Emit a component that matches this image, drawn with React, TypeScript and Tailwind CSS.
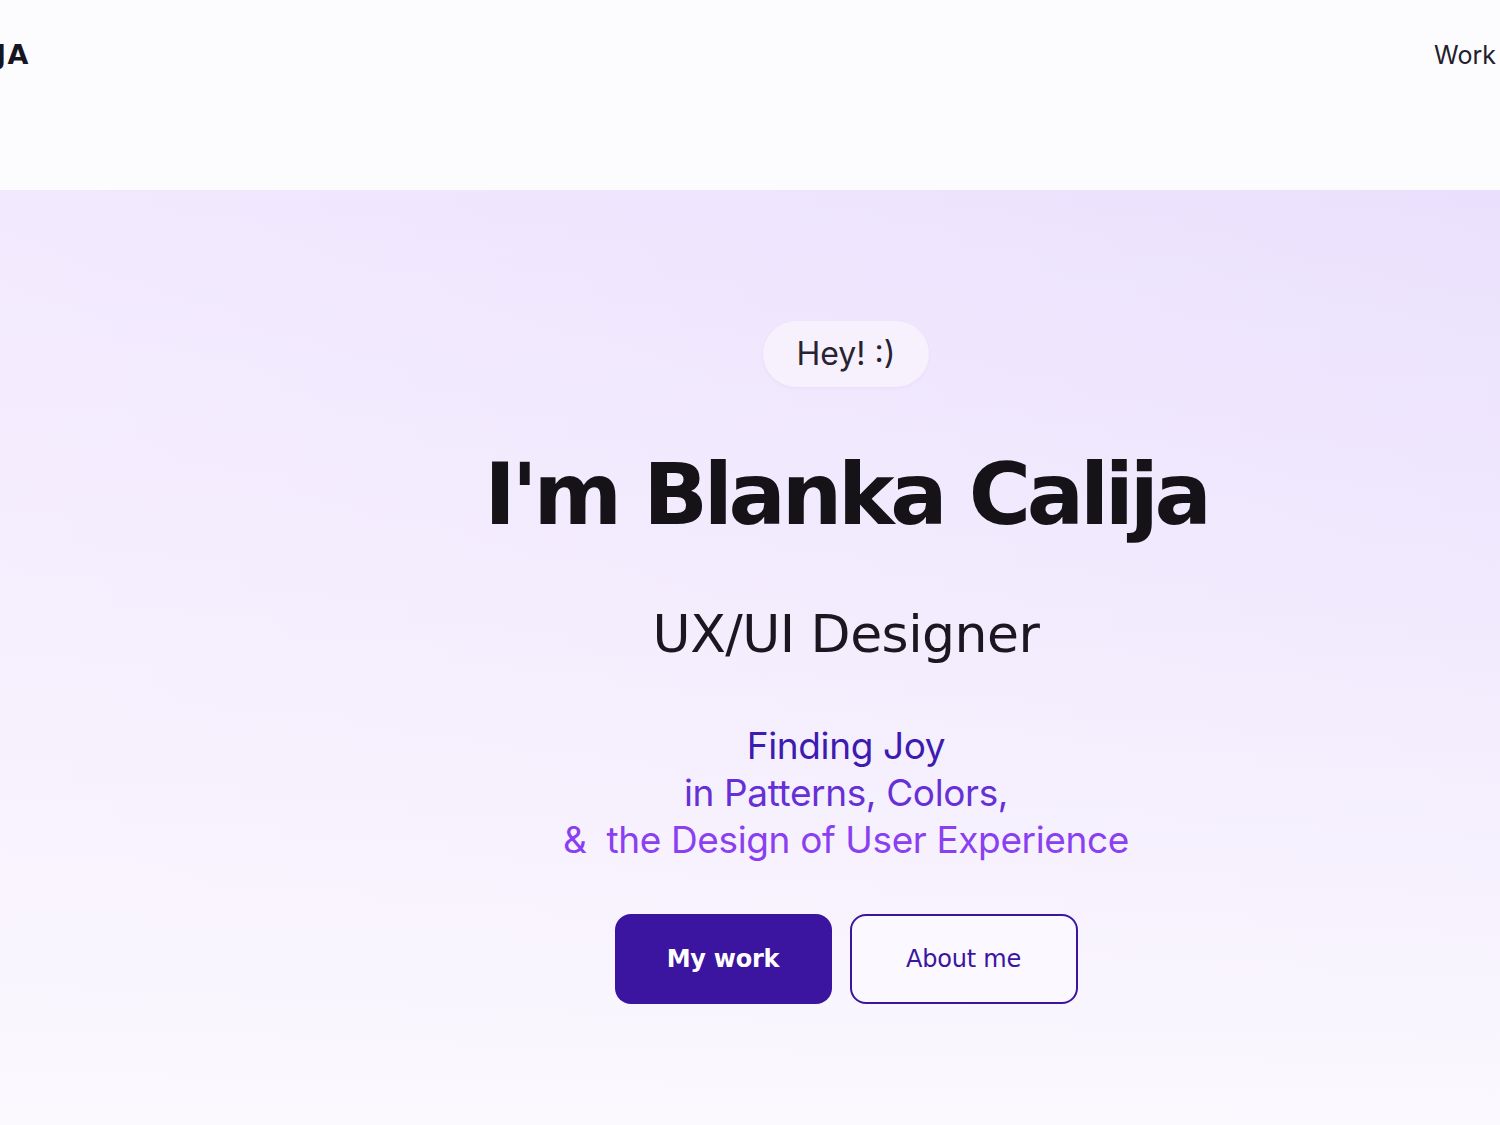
import React from 'react';

const wide = { fontFamily: '"DejaVu Sans", "Liberation Sans", sans-serif' };
const body = { fontFamily: 'Inter, "Liberation Sans", sans-serif' };

export default function App() {
  return (
    <div className="min-h-[1125px] w-full overflow-hidden bg-[#fcfbfe]" style={body}>
      {/* Header */}
      <header className="flex h-[190px] items-start justify-between pt-[38px]">
        <div className="-ml-[4px] text-[27px] font-bold leading-[34px] tracking-[0.05em] text-[#17151d]" style={wide}>
          JA
        </div>
        <nav className="pr-[4px] text-[25px] leading-[34px] text-[#22202b]">Work</nav>
      </header>

      {/* Hero */}
      <section className="flex min-h-[935px] flex-col items-center bg-[linear-gradient(to_bottom,rgba(251,248,254,0)_0%,rgba(251,248,254,0.4)_45%,#fbf8fe_100%),linear-gradient(to_left,#eae0fd,#f2e9fe)] pl-[192px] pt-[131px]">
        <div className="rounded-full bg-[#f7f1fe] px-[34px] py-[10px] text-[32px] leading-[46px] text-[#27232f] shadow-[0_1px_3px_rgba(120,80,200,0.08)]">
          Hey! :)
        </div>

        <h1 className="mt-[56px] text-[85px] font-bold leading-[104px] tracking-[-0.05em] text-[#151218]" style={wide}>
          I'm Blanka Calija
        </h1>

        <h2 className="mt-[56px] text-[52px] leading-[62px] tracking-[-0.01em] text-[#1a1720]" style={wide}>
          UX/UI Designer
        </h2>

        <div className="mt-[57px] flex flex-col items-center text-[37px] leading-[47px] tracking-[-0.01em]">
          <span className="text-[#3e1bb0]">Finding Joy</span>
          <span className="text-[#6630d6]">in Patterns, Colors,</span>
          <span className="text-[#8a3ff0]">&amp;&nbsp; the Design of User Experience</span>
        </div>

        <div className="mt-[51px] flex gap-[18px]" style={wide}>
          <button className="h-[90px] w-[217px] rounded-[16px] bg-[#3b14a0] text-[24px] font-bold tracking-[-0.01em] text-white">
            My work
          </button>
          <button className="h-[90px] w-[228px] rounded-[16px] border-2 border-[#3b14a0] bg-[#fbf8ff] text-[24px] font-medium tracking-[-0.01em] text-[#3b14a0]">
            About me
          </button>
        </div>
      </section>
    </div>
  );
}
